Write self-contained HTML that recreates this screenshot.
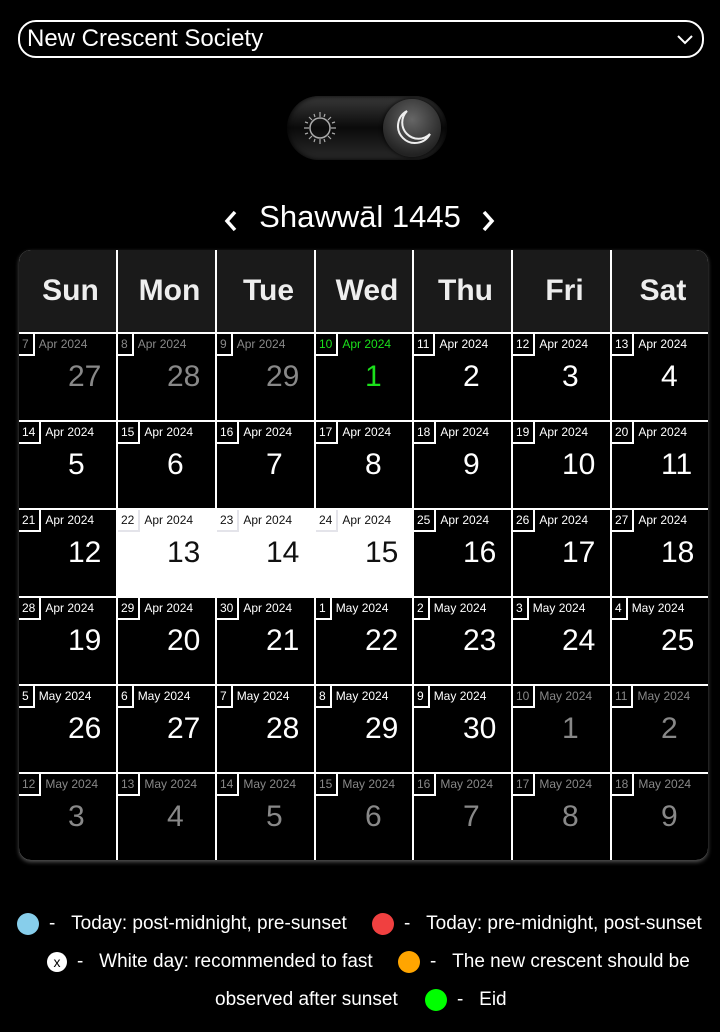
<!DOCTYPE html>
<html><head><meta charset="utf-8"><style>
*{box-sizing:border-box;margin:0;padding:0}
body{width:720px;height:1032px;background:#000;font-family:"Liberation Sans",Roboto,sans-serif;color:#fff;position:relative;overflow:hidden}
.sel{position:absolute;left:18px;top:20px;width:686px;height:38px;border:2px solid #fff;border-radius:18px;font-size:24px;line-height:34px;padding-left:7px}
.sel svg{position:absolute;right:8px;top:10px}
.tog{position:absolute;left:287px;top:96px;width:160px;height:64px;border-radius:32px;background:linear-gradient(#3a3a3a,#0a0a0a 50%,#2a2a2a);box-shadow:inset 0 0 6px #000}
.knob{position:absolute;left:96px;top:3px;width:58px;height:58px;border-radius:50%;background:radial-gradient(circle at 50% 35%,#666,#222 75%);box-shadow:0 0 4px #000}
.title{position:absolute;left:0;width:720px;top:199px;text-align:center;font-size:31px}
.grid{position:absolute;left:19px;top:250px;width:689px;height:610px;background:#fff;display:grid;grid-template-columns:97px 97px 97px 96px 97px 97px 96px;grid-template-rows:82px repeat(6,86px);gap:2px;border-radius:12px;overflow:hidden;box-shadow:0 2px 4px #555}
.h{background:#1a1a1a;font-weight:bold;font-size:30px;display:flex;align-items:center;justify-content:center;color:#eee;padding-left:6px}
.c{background:#000;position:relative}
.c .t{position:absolute;left:0;top:0;font-size:12px;line-height:20px;white-space:nowrap}
.c .b{display:inline-block;padding:0 4px 0 3px;height:22px;border-right:2px solid #fff;border-bottom:2px solid #fff;vertical-align:top}
.c .m{display:inline-block;margin-left:4px;vertical-align:top}
.c .n{position:absolute;left:49px;top:26px;font-size:30px}
.g{color:#888}
.gr{color:#1be01b}
.w{background:#fff;color:#111}.w .b{border-color:#e4e4ea}
.dot{position:absolute;width:22px;height:22px;border-radius:50%}
.lg{position:absolute;font-size:19px}
</style></head><body>
<div class="sel">New Crescent Society<svg width="18" height="14" viewBox="0 0 18 14"><path d="M2 4l7 7 7-7" fill="none" stroke="#fff" stroke-width="2"/></svg></div>
<div class="tog">
<svg style="position:absolute;left:14px;top:14px" width="38" height="36" viewBox="0 0 38 36"><circle cx="19" cy="18" r="10" fill="none" stroke="#aaa" stroke-width="1.5"/><g stroke="#aaa" stroke-width="1.2"><path d="M19 2v5M19 29v5M3 18h5M30 18h5M8 7l3 3M27 26l3 3M8 29l3-3M27 10l3-3M13 4l1 3M24 4l-1 3M13 32l1-3M24 32l-1-3M4 12l3 1M34 12l-3 1M4 24l3-1M34 24l-3-1"/></g></svg>
<div class="knob"><svg width="58" height="58" viewBox="0 0 58 58"><path d="M24 12a17 17 0 1 0 23 23a14 14 0 0 1-23-23z" fill="none" stroke="#eee" stroke-width="2"/></svg></div>
</div>
<div class="title"><svg width="16" height="24" viewBox="0 0 16 24" style="position:absolute;left:223px;top:10px"><path d="M12 3L4 12l8 9" fill="none" stroke="#fff" stroke-width="3.5"/></svg>Shawwāl 1445<svg width="16" height="24" viewBox="0 0 16 24" style="position:absolute;left:480px;top:10px"><path d="M4 3l8 9-8 9" fill="none" stroke="#fff" stroke-width="3.5"/></svg></div>
<div class="grid">
<div class="h">Sun</div><div class="h">Mon</div><div class="h">Tue</div><div class="h">Wed</div><div class="h">Thu</div><div class="h">Fri</div><div class="h">Sat</div>
<div class="c g"><div class="t"><span class="b">7</span><span class="m">Apr 2024</span></div><div class="n">27</div></div>
<div class="c g"><div class="t"><span class="b">8</span><span class="m">Apr 2024</span></div><div class="n">28</div></div>
<div class="c g"><div class="t"><span class="b">9</span><span class="m">Apr 2024</span></div><div class="n">29</div></div>
<div class="c gr"><div class="t"><span class="b">10</span><span class="m">Apr 2024</span></div><div class="n">1</div></div>
<div class="c"><div class="t"><span class="b">11</span><span class="m">Apr 2024</span></div><div class="n">2</div></div>
<div class="c"><div class="t"><span class="b">12</span><span class="m">Apr 2024</span></div><div class="n">3</div></div>
<div class="c"><div class="t"><span class="b">13</span><span class="m">Apr 2024</span></div><div class="n">4</div></div>
<div class="c"><div class="t"><span class="b">14</span><span class="m">Apr 2024</span></div><div class="n">5</div></div>
<div class="c"><div class="t"><span class="b">15</span><span class="m">Apr 2024</span></div><div class="n">6</div></div>
<div class="c"><div class="t"><span class="b">16</span><span class="m">Apr 2024</span></div><div class="n">7</div></div>
<div class="c"><div class="t"><span class="b">17</span><span class="m">Apr 2024</span></div><div class="n">8</div></div>
<div class="c"><div class="t"><span class="b">18</span><span class="m">Apr 2024</span></div><div class="n">9</div></div>
<div class="c"><div class="t"><span class="b">19</span><span class="m">Apr 2024</span></div><div class="n">10</div></div>
<div class="c"><div class="t"><span class="b">20</span><span class="m">Apr 2024</span></div><div class="n">11</div></div>
<div class="c"><div class="t"><span class="b">21</span><span class="m">Apr 2024</span></div><div class="n">12</div></div>
<div class="c w"><div class="t"><span class="b">22</span><span class="m">Apr 2024</span></div><div class="n">13</div></div>
<div class="c w"><div class="t"><span class="b">23</span><span class="m">Apr 2024</span></div><div class="n">14</div></div>
<div class="c w"><div class="t"><span class="b">24</span><span class="m">Apr 2024</span></div><div class="n">15</div></div>
<div class="c"><div class="t"><span class="b">25</span><span class="m">Apr 2024</span></div><div class="n">16</div></div>
<div class="c"><div class="t"><span class="b">26</span><span class="m">Apr 2024</span></div><div class="n">17</div></div>
<div class="c"><div class="t"><span class="b">27</span><span class="m">Apr 2024</span></div><div class="n">18</div></div>
<div class="c"><div class="t"><span class="b">28</span><span class="m">Apr 2024</span></div><div class="n">19</div></div>
<div class="c"><div class="t"><span class="b">29</span><span class="m">Apr 2024</span></div><div class="n">20</div></div>
<div class="c"><div class="t"><span class="b">30</span><span class="m">Apr 2024</span></div><div class="n">21</div></div>
<div class="c"><div class="t"><span class="b">1</span><span class="m">May 2024</span></div><div class="n">22</div></div>
<div class="c"><div class="t"><span class="b">2</span><span class="m">May 2024</span></div><div class="n">23</div></div>
<div class="c"><div class="t"><span class="b">3</span><span class="m">May 2024</span></div><div class="n">24</div></div>
<div class="c"><div class="t"><span class="b">4</span><span class="m">May 2024</span></div><div class="n">25</div></div>
<div class="c"><div class="t"><span class="b">5</span><span class="m">May 2024</span></div><div class="n">26</div></div>
<div class="c"><div class="t"><span class="b">6</span><span class="m">May 2024</span></div><div class="n">27</div></div>
<div class="c"><div class="t"><span class="b">7</span><span class="m">May 2024</span></div><div class="n">28</div></div>
<div class="c"><div class="t"><span class="b">8</span><span class="m">May 2024</span></div><div class="n">29</div></div>
<div class="c"><div class="t"><span class="b">9</span><span class="m">May 2024</span></div><div class="n">30</div></div>
<div class="c g"><div class="t"><span class="b">10</span><span class="m">May 2024</span></div><div class="n">1</div></div>
<div class="c g"><div class="t"><span class="b">11</span><span class="m">May 2024</span></div><div class="n">2</div></div>
<div class="c g"><div class="t"><span class="b">12</span><span class="m">May 2024</span></div><div class="n">3</div></div>
<div class="c g"><div class="t"><span class="b">13</span><span class="m">May 2024</span></div><div class="n">4</div></div>
<div class="c g"><div class="t"><span class="b">14</span><span class="m">May 2024</span></div><div class="n">5</div></div>
<div class="c g"><div class="t"><span class="b">15</span><span class="m">May 2024</span></div><div class="n">6</div></div>
<div class="c g"><div class="t"><span class="b">16</span><span class="m">May 2024</span></div><div class="n">7</div></div>
<div class="c g"><div class="t"><span class="b">17</span><span class="m">May 2024</span></div><div class="n">8</div></div>
<div class="c g"><div class="t"><span class="b">18</span><span class="m">May 2024</span></div><div class="n">9</div></div>
</div>
<div class="dot" style="left:17px;top:913px;background:#87ceeb"></div>
<div class="lg" style="left:49px;top:913px">-&nbsp;&nbsp;&nbsp;Today: post-midnight, pre-sunset</div>
<div class="dot" style="left:372px;top:913px;background:#f04040"></div>
<div class="lg" style="left:404px;top:913px">-&nbsp;&nbsp;&nbsp;Today: pre-midnight, post-sunset</div>
<div class="dot" style="left:47px;top:952px;width:20px;height:20px;background:#fff;color:#000;font-size:14px;text-align:center;line-height:20px">x</div>
<div class="lg" style="left:77px;top:951px">-&nbsp;&nbsp;&nbsp;White day: recommended to fast</div>
<div class="dot" style="left:398px;top:951px;background:#ffa500"></div>
<div class="lg" style="left:430px;top:951px">-&nbsp;&nbsp;&nbsp;The new crescent should be</div>
<div class="lg" style="left:215px;top:989px">observed after sunset</div>
<div class="dot" style="left:425px;top:989px;background:#00ff00"></div>
<div class="lg" style="left:457px;top:989px">-&nbsp;&nbsp;&nbsp;Eid</div>
</body></html>
